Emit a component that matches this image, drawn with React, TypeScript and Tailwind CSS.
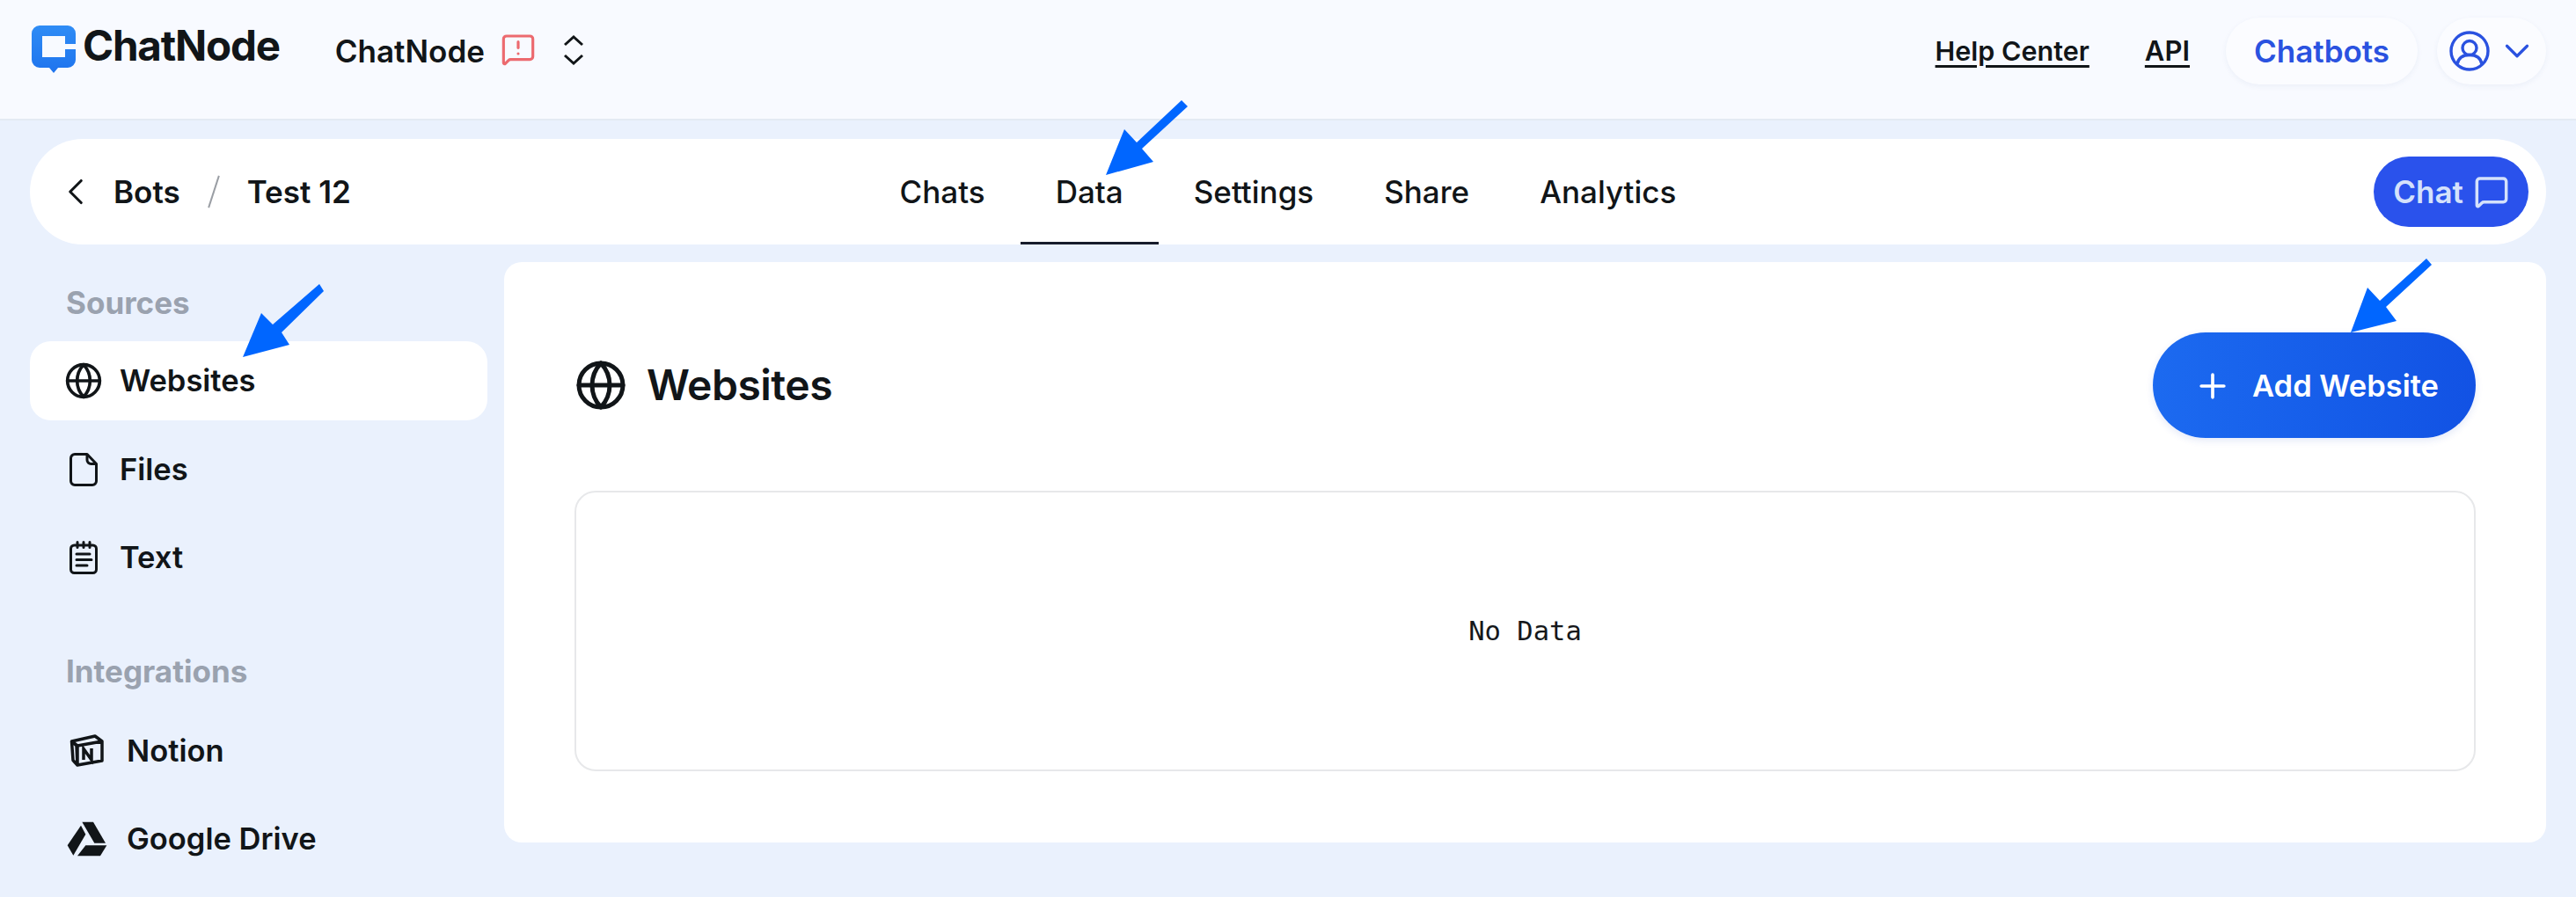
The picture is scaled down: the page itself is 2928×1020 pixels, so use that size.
import { ChevronDown, ChevronLeft, Globe, MessageSquare, MessageSquareWarning, Plus } from "lucide-react";

const TABS = ["Chats", "Data", "Settings", "Share", "Analytics"];

const ARROWS = [
  "276,406 297,356 310,369 363,323 368,331 320,378 329,392",
  "1257,199 1278,147 1292,162 1343,114 1350,121 1298,169 1311,184",
  "2672,378 2691,327 2705,342 2758,294 2764,301 2712,349 2724,365",
];

function Logo() {
  return (
    <svg viewBox="0 0 50 54" className="h-[54px] w-[50px] shrink-0">
      <defs>
        <linearGradient id="logo" x1="0" y1="0" x2="0" y2="1">
          <stop offset="0" stopColor="#2f8cf5" />
          <stop offset="1" stopColor="#1f74ee" />
        </linearGradient>
      </defs>
      <path
        d="M9 0h32a9 9 0 0 1 9 9v30a9 9 0 0 1-9 9H30l-5 6-5-6H9a9 9 0 0 1-9-9V9a9 9 0 0 1 9-9z"
        fill="url(#logo)"
      />
      <path d="M12 12h26v9H50v6H38v9H12z" fill="#f8faff" />
    </svg>
  );
}

function UpDownIcon() {
  return (
    <svg viewBox="0 0 24 34" className="h-[34px] w-[24px]" fill="none" stroke="#111518" strokeWidth="3">
      <path d="M2 11 12 2l10 9M2 23l10 9 10-9" />
    </svg>
  );
}

function FileIcon() {
  return (
    <svg viewBox="0 0 32 38" className="h-[38px] w-[32px]" fill="none" stroke="#111518" strokeWidth="3" strokeLinejoin="round">
      <path d="M6 1.500h14l10.500 11V32a4.500 4.500 0 0 1-4.500 4.500H6A4.500 4.500 0 0 1 1.500 32V6A4.500 4.500 0 0 1 6 1.500z" />
      <path d="M20 1.500V8a4.500 4.500 0 0 0 4.500 4.500h6" />
    </svg>
  );
}

function TextIcon() {
  return (
    <svg viewBox="0 0 32 38" className="h-[38px] w-[32px]" fill="none" stroke="#111518" strokeWidth="3" strokeLinecap="round">
      <rect x="1.500" y="5" width="29" height="31.500" rx="4" />
      <path d="M9 1.500v6M16 1.500v6M23 1.500v6" />
      <path d="M8 15h15M8 21.500h17M8 28h12" />
    </svg>
  );
}

function NotionIcon() {
  return (
    <svg viewBox="0 0 40 38" className="h-[38px] w-[40px]" fill="none" stroke="#111518">
      <path d="M2.500 8 8 13l1 22-5-5.500zM2.500 8 29 2l8 6-28 5zM9 13l28-5v22l-28 5z" strokeWidth="3.500" strokeLinejoin="round" />
      <path d="M16 29V16.500l9 12.500V16" strokeWidth="3.500" strokeLinejoin="miter" />
    </svg>
  );
}

function DriveIcon() {
  return (
    <svg viewBox="48 336 138 120" className="h-[40px] w-[46px]" fill="#111518">
      <path d="M96 350l16 30-42 72-20-34z" />
      <path d="M100 338h38l42 72h-38z" />
      <path d="M112 418h72l-22 36H84z" />
    </svg>
  );
}

function UserIcon() {
  return (
    <svg viewBox="0 0 46 46" className="h-[46px] w-[46px]" fill="none" stroke="#2a52e0" strokeWidth="3.400">
      <circle cx="23" cy="23" r="21" />
      <circle cx="23" cy="19.500" r="8" />
      <path d="M9 38c1-6 5-10.500 14-10.500S36 32 37 38" />
    </svg>
  );
}

function NavItem({ icon, label, active, wide }: { icon: React.ReactNode; label: string; active?: boolean; wide?: boolean }) {
  return (
    <div className={`flex h-[90px] items-center rounded-[24px] pl-[42px] ${active ? "bg-white" : ""}`}>
      <div className={`flex shrink-0 justify-center ${wide ? "w-[46px] mr-[22px]" : "w-[38px] mr-[22px]"}`}>{icon}</div>
      <span className="text-[34.500px] font-semibold text-[#111518]">{label}</span>
    </div>
  );
}

export default function App() {
  return (
    <div className="relative h-[1020px] w-[2928px] overflow-hidden bg-[#eaf1fd] font-['Inter',sans-serif] text-[#111518]">
      {/* top header */}
      <header className="flex h-[137px] items-start justify-between border-b-2 border-[#e4eaf3] bg-[#f8faff] pl-[36px] pr-[34px]">
        <div className="flex items-start pt-[29px]">
          <Logo />
          <span className="ml-[8px] text-[47.500px] leading-[46px] font-bold tracking-[-1.200px]">ChatNode</span>
          <span className="ml-[63px] mt-[8px] text-[35px] leading-[42px] font-semibold">ChatNode</span>
          <MessageSquareWarning className="ml-[18px] mt-[7px] h-[40px] w-[40px] shrink-0 text-[#ec6a6f]" strokeWidth={1.9} />
          <div className="ml-[31px] mt-[11px]">
            <UpDownIcon />
          </div>
        </div>
        <div className="flex items-center pt-[20px]">
          <a className="text-[30.500px] font-semibold underline underline-offset-[5px]">Help Center</a>
          <a className="ml-[63px] text-[31px] font-semibold underline underline-offset-[5px]">API</a>
          <div className="ml-[41px] flex h-[76px] w-[218px] items-center justify-center rounded-full bg-[#fbfcff] text-[35px] font-semibold text-[#2a52e0] shadow-[0_2px_6px_rgba(40,70,130,0.06)]">
            Chatbots
          </div>
          <div className="ml-[22px] flex h-[76px] w-[124px] items-center rounded-full bg-[#fbfcff] pl-[14px] shadow-[0_2px_6px_rgba(40,70,130,0.06)]">
            <UserIcon />
            <ChevronDown className="ml-[8px] h-[46px] w-[46px] text-[#2a52e0]" strokeWidth={1.7} />
          </div>
        </div>
      </header>

      {/* bot bar */}
      <div className="mx-[34px] mt-[21px] grid h-[120px] grid-cols-[1fr_auto_1fr] items-stretch rounded-[60px] bg-white">
        <div className="flex items-center pl-[27px] text-[35px] font-semibold">
          <ChevronLeft className="h-[50px] w-[50px]" strokeWidth={1.5} />
          <span className="ml-[18px]">Bots</span>
          <span className="ml-[37px] h-[38px] w-[2px] rotate-[18deg] bg-[#9a9ea4]" />
          <span className="ml-[37px]">Test 12</span>
        </div>
        <nav className="flex">
          {TABS.map((t) => (
            <div
              key={t}
              className={`flex items-center px-[40px] text-[35px] font-medium ${t === "Data" ? "border-b-[3px] border-[#171c2b] pt-[3px]" : ""}`}
            >
              {t}
            </div>
          ))}
        </nav>
        <div className="flex items-center justify-end pr-[20px]">
          <div className="flex h-[80px] w-[176px] items-center justify-center gap-[12px] rounded-[40px] bg-[#2a52ec] text-[35px] font-semibold text-[#d4e1fb]">
            Chat
            <MessageSquare className="h-[40px] w-[40px]" strokeWidth={2.1} />
          </div>
        </div>
      </div>

      <div className="mx-[34px] mt-[20px] flex items-start">
        {/* sidebar */}
        <aside className="w-[520px] shrink-0 pt-[24px]">
          <div className="pl-[41px] text-[35px] leading-[44px] font-bold text-[#9aa2af]">Sources</div>
          <div className="mt-[22px] flex flex-col gap-[10.500px]">
            <NavItem icon={<Globe className="h-[44px] w-[44px] shrink-0" strokeWidth={2} />} label="Websites" active />
            <NavItem icon={<FileIcon />} label="Files" />
            <NavItem icon={<TextIcon />} label="Text" />
          </div>
          <div className="mt-[62px] pl-[41px] text-[35px] leading-[44px] font-bold text-[#9aa2af]">Integrations</div>
          <div className="mt-[24px] flex flex-col gap-[10px]">
            <NavItem icon={<NotionIcon />} label="Notion" wide />
            <NavItem icon={<DriveIcon />} label="Google Drive" wide />
          </div>
        </aside>

        {/* main panel */}
        <main className="ml-[19px] h-[660px] flex-1 rounded-[20px] bg-white px-[80px] pt-[80px]">
          <div className="flex h-[120px] items-center justify-between">
            <div className="flex items-center gap-[22px]">
              <Globe className="h-[60px] w-[60px]" strokeWidth={2} />
              <h1 className="text-[48px] font-semibold tracking-[-0.5px]">Websites</h1>
            </div>
            <button className="flex h-[120px] w-[367px] items-center justify-center gap-[23px] rounded-full bg-gradient-to-r from-[#1c6af0] to-[#1252e4] pl-[4px] pt-[2px] text-[34.500px] font-semibold text-white shadow-[0_3px_8px_rgba(30,70,200,0.12)]">
              <Plus className="h-[44px] w-[44px]" strokeWidth={2} />
              Add Website
            </button>
          </div>
          <div className="mt-[60px] flex h-[319px] items-center justify-center rounded-[24px] border-2 border-[#e7e8ea] font-['DejaVu_Sans_Mono',monospace] text-[30.500px] text-[#16181b]">
            No Data
          </div>
        </main>
      </div>

      {/* annotation arrows over the page */}
      <svg className="absolute top-0 left-0 h-[1020px] w-[2928px]" viewBox="0 0 2928 1020">
        {ARROWS.map((p) => (
          <polygon key={p} points={p} fill="#0066ff" />
        ))}
      </svg>
    </div>
  );
}
